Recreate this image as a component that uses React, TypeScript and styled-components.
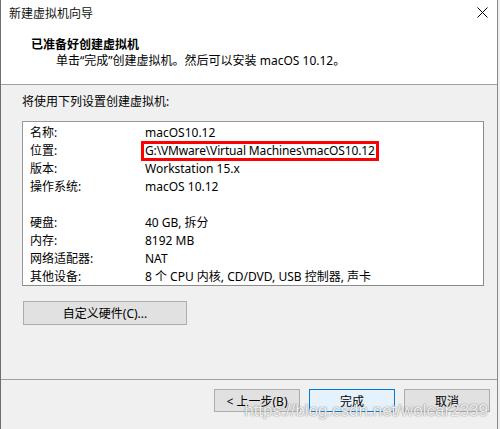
import React from "react";
import styled, { createGlobalStyle } from "styled-components";

const Global = createGlobalStyle`
  html, body { margin: 0; padding: 0; background: #f0f0f0; }
  body { font-family: "Noto Sans", "Noto Sans CJK SC", sans-serif; font-size: 12px; color: #000; }
`;

const Window = styled.div`
  position: relative;
  width: 496px;
  height: 429px;
  border-left: 1px solid #6f6f6f;
  border-right: 1px solid #8a8a8a;
  background: #f0f0f0;
  display: flex;
  flex-direction: column;
  box-sizing: content-box;
  overflow: hidden;
`;

const Header = styled.div`
  background: #fff;
  height: 84px;
  border-bottom: 1px solid #a0a0a0;
  display: flex;
  flex-direction: column;
`;

const TitleBar = styled.div`
  height: 25px;
  display: flex;
  align-items: center;
  justify-content: space-between;
  padding: 0 9px 0 8px;
`;

const Title = styled.span`
  font-family: "Noto Sans CJK SC", sans-serif;
  font-size: 12px;
  color: #111;
`;

const Close = styled.svg`
  width: 11px;
  height: 11px;
`;

const HeadInfo = styled.div`
  padding: 10px 0 0 30px;
  display: flex;
  flex-direction: column;
`;

const Heading = styled.div`
  font-family: "Noto Sans CJK SC", sans-serif;
  font-weight: 700;
  font-size: 12px;
  line-height: 17px;
`;

const Sub = styled.div`
  padding-left: 25px;
  line-height: 18px;
  font-size: 12px;
`;

const Body = styled.div`
  flex: 1;
  display: flex;
  flex-direction: column;
  padding: 8px 0 0 21px;
`;

const Intro = styled.div`
  line-height: 18px;
`;

const SummaryBox = styled.div`
  margin-top: 10px;
  width: 462px;
  height: 165px;
  box-sizing: border-box;
  background: #fff;
  border: 1px solid #999;
  border-right-color: #8a8a8a;
  border-bottom-color: #8a8a8a;
  padding: 2px 0 0 7px;
`;

const Row = styled.div`
  display: grid;
  grid-template-columns: 115px auto;
  height: 18px;
  line-height: 18px;
  align-items: center;
`;

const Value = styled.span<{ $hl?: boolean }>`
  justify-self: start;
  ${(p) =>
    p.$hl
      ? `outline: 3px solid #ff0000; outline-offset: -1px; padding: 0 2px 0 2px; margin-left: -2px; line-height: 16px; letter-spacing: -0.15px;`
      : ""}
`;

const WinButton = styled.button<{ $primary?: boolean; $w?: number }>`
  box-sizing: border-box;
  height: ${(p) => (p.$w ? 23 : 24)}px;
  width: ${(p) => p.$w ?? 164}px;
  background: ${(p) => (p.$primary ? "#e5f1fb" : "#e1e1e1")};
  border: 1px solid ${(p) => (p.$primary ? "#0078d7" : "#adadad")};
  font-family: "Noto Sans", "Noto Sans CJK SC", sans-serif;
  font-size: 12px;
  color: #000;
  padding: 0;
  border-radius: 0;
`;

const CustomBtnWrap = styled.div`
  margin-top: 15px;
  padding-left: 1px;
`;

const Footer = styled.div`
  height: 40px;
  border-top: 1px solid #a0a0a0;
  display: flex;
  justify-content: flex-end;
  align-items: flex-start;
  padding: 9px 7px 0 0;
  gap: 9px;
`;

const Watermark = styled.div`
  position: absolute;
  right: 9px;
  bottom: 8px;
  font-family: "Liberation Sans", sans-serif;
  font-size: 17px;
  color: rgba(255, 255, 255, 0.9);
  text-shadow: 0 0 1px rgba(90, 90, 90, 0.8), 0 0 2px rgba(140, 140, 140, 0.5);
  pointer-events: none;
`;

const rows: [string, string, boolean?][] = [
  ["名称:", "macOS10.12"],
  ["位置:", "G:\\VMware\\Virtual Machines\\macOS10.12", true],
  ["版本:", "Workstation 15.x"],
  ["操作系统:", "macOS 10.12"],
  ["", ""],
  ["硬盘:", "40 GB, 拆分"],
  ["内存:", "8192 MB"],
  ["网络适配器:", "NAT"],
  ["其他设备:", "8 个 CPU 内核, CD/DVD, USB 控制器, 声卡"],
];

export default function App() {
  return (
    <>
      <Global />
      <Window>
        <Header>
          <TitleBar>
            <Title>新建虚拟机向导</Title>
            <Close viewBox="0 0 11 11">
              <path d="M0.5 0.5 L10.5 10.5 M10.5 0.5 L0.5 10.5" stroke="#000" strokeWidth="1" fill="none" />
            </Close>
          </TitleBar>
          <HeadInfo>
            <Heading>已准备好创建虚拟机</Heading>
            <Sub>单击“完成”创建虚拟机。然后可以安装 macOS 10.12。</Sub>
          </HeadInfo>
        </Header>
        <Body>
          <Intro>将使用下列设置创建虚拟机:</Intro>
          <SummaryBox>
            {rows.map(([k, v, hl], i) => (
              <Row key={i}>
                <span>{k}</span>
                <Value $hl={hl}>{v}</Value>
              </Row>
            ))}
          </SummaryBox>
          <CustomBtnWrap>
            <WinButton>自定义硬件(C)...</WinButton>
          </CustomBtnWrap>
        </Body>
        <Footer>
          <WinButton $w={86}>&lt; 上一步(B)</WinButton>
          <WinButton $w={86} $primary>完成</WinButton>
          <WinButton $w={86}>取消</WinButton>
        </Footer>
        <Watermark>https://blog.csdn.net/wolcar2339</Watermark>
      </Window>
    </>
  );
}
